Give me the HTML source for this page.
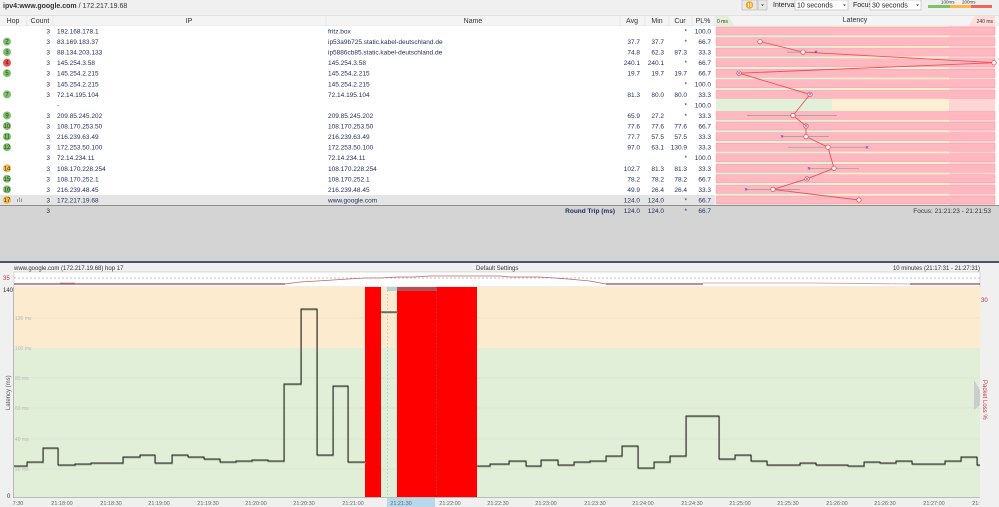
<!DOCTYPE html>
<html><head><meta charset="utf-8"><style>
html,body{margin:0;padding:0;background:#f0f0f0;}
svg{display:block;font-family:"Liberation Sans",sans-serif;}
</style></head><body>
<svg width="999" height="507" viewBox="0 0 999 507" xmlns="http://www.w3.org/2000/svg">
<rect x="0" y="0" width="999" height="15" fill="#f0f0f0"/>
<text x="3" y="8" font-size="7" fill="#333"><tspan font-weight="bold">ipv4:www.google.com</tspan> / 172.217.19.68</text>
<rect x="742" y="0" width="15" height="10" fill="#e8e8e8" stroke="#aaa" stroke-width="0.5"/>
<circle cx="749.5" cy="5" r="3.8" fill="#f5a623"/>
<rect x="748" y="3" width="1" height="4" fill="#fff"/><rect x="750.3" y="3" width="1" height="4" fill="#fff"/>
<rect x="758" y="0" width="9" height="10" fill="#e8e8e8" stroke="#aaa" stroke-width="0.5"/>
<path d="M761 4.5 L764 4.5 L762.5 6 Z" fill="#333"/>
<text x="773" y="7" font-size="7" fill="#222">Interval</text>
<rect x="795" y="0" width="53" height="10" fill="#fff" stroke="#aaa" stroke-width="0.5"/>
<text x="797" y="7.5" font-size="7" fill="#222">10 seconds</text><path d="M843 4.5 L846 4.5 L844.5 6 Z" fill="#333"/>
<text x="853" y="7" font-size="7" fill="#222">Focus</text>
<rect x="870" y="0" width="51" height="10" fill="#fff" stroke="#aaa" stroke-width="0.5"/>
<text x="872" y="7.5" font-size="7" fill="#222">30 seconds</text><path d="M916 4.5 L919 4.5 L917.5 6 Z" fill="#333"/>
<text x="941" y="3.5" font-size="4.5" fill="#333">100ms</text><text x="962" y="3.5" font-size="4.5" fill="#333">200ms</text>
<rect x="928" y="5" width="22" height="3" fill="#7dc26a"/><rect x="950" y="5" width="21" height="3" fill="#f8b84e"/><rect x="971" y="5" width="21" height="3" fill="#f0665a"/>

<rect x="0" y="15" width="999" height="11" fill="#f4f4f4"/>
<line x1="0" y1="15.5" x2="999" y2="15.5" stroke="#ccc" stroke-width="0.6"/>
<line x1="0" y1="26" x2="999" y2="26" stroke="#ddd" stroke-width="0.6"/>
<g stroke="#ddd" stroke-width="0.6">
<line x1="27" y1="16" x2="27" y2="26"/><line x1="53" y1="16" x2="53" y2="26"/><line x1="326" y1="16" x2="326" y2="26"/><line x1="620" y1="16" x2="620" y2="26"/><line x1="645" y1="16" x2="645" y2="26"/><line x1="669" y1="16" x2="669" y2="26"/><line x1="692" y1="16" x2="692" y2="26"/><line x1="715" y1="16" x2="715" y2="26"/>
</g>
<g font-size="7" fill="#333" text-anchor="middle">
<text x="13" y="23">Hop</text><text x="40" y="23">Count</text><text x="189" y="23">IP</text><text x="473" y="23">Name</text><text x="632" y="23">Avg</text><text x="657" y="23">Min</text><text x="680" y="23">Cur</text><text x="703" y="23">PL%</text><text x="855" y="22">Latency</text>
</g>
<path d="M716 16 L728 16 L735 26 L716 26 Z" fill="#e2f0d9"/>
<path d="M975 16 L995 16 L995 26 L968 26 Z" fill="#fdd"/>
<text x="717" y="23" font-size="5" fill="#333">0 ms</text>
<text x="993" y="23" font-size="5" fill="#333" text-anchor="end">240 ms</text>

<rect x="0" y="26" width="999" height="180" fill="#fff"/>
<rect x="0" y="195" width="715" height="10" fill="#e4e4e4"/>
<rect x="716" y="26" width="116" height="179" fill="#e2f0d9"/>
<rect x="832" y="26" width="117" height="179" fill="#fdefd3"/>
<rect x="949" y="26" width="46" height="179" fill="#fdd5d5"/>
<g fill="#ffb7c0" stroke="#f39aa5" stroke-width="0.4">
<rect x="716" y="27" width="279" height="8"/><rect x="716" y="37.6" width="279" height="8"/><rect x="716" y="48.1" width="279" height="8"/><rect x="716" y="58.7" width="279" height="8"/><rect x="716" y="69.2" width="279" height="8"/><rect x="716" y="79.8" width="279" height="8"/><rect x="716" y="90.4" width="279" height="8"/><rect x="716" y="111.5" width="279" height="8"/><rect x="716" y="122" width="279" height="8"/><rect x="716" y="132.6" width="279" height="8"/><rect x="716" y="143.2" width="279" height="8"/><rect x="716" y="153.7" width="279" height="8"/><rect x="716" y="164.3" width="279" height="8"/><rect x="716" y="174.8" width="279" height="8"/><rect x="716" y="185.4" width="279" height="8"/><rect x="716" y="196" width="279" height="8"/>
</g>
<g stroke="#999" stroke-width="0.7">
<line x1="787" y1="52.1" x2="816" y2="52.1"/><line x1="747" y1="115.5" x2="837" y2="115.5"/><line x1="782" y1="136.6" x2="829" y2="136.6"/><line x1="788" y1="147.2" x2="867" y2="147.2"/><line x1="809" y1="168.3" x2="859" y2="168.3"/><line x1="746" y1="189.4" x2="800" y2="189.4"/>
</g>
<polyline fill="none" stroke="#f0505a" stroke-width="0.9" points="760,41.6 803,52.1 995,62.7 739,73.2 810,94.4 793,115.5 806,126 806,136.6 828,147.2 834,168.3 807,178.8 773,189.4 859,200"/>
<g fill="#fff" stroke="#f0505a" stroke-width="0.8">
<circle cx="760" cy="41.6" r="2.2"/><circle cx="803" cy="52.1" r="2.2"/><circle cx="994" cy="62.7" r="2.2"/><circle cx="739" cy="73.2" r="2.2"/><circle cx="810" cy="94.4" r="2.2"/><circle cx="793" cy="115.5" r="2.2"/><circle cx="806" cy="126" r="2.2"/><circle cx="806" cy="136.6" r="2.2"/><circle cx="828" cy="147.2" r="2.2"/><circle cx="834" cy="168.3" r="2.2"/><circle cx="807" cy="178.8" r="2.2"/><circle cx="773" cy="189.4" r="2.2"/><circle cx="859" cy="200" r="2.2"/>
</g>
<g font-size="6" fill="#3333cc" text-anchor="middle">
<text x="816" y="54.2">×</text><text x="739" y="75.3">×</text><text x="810" y="96.5">×</text><text x="806" y="128">×</text><text x="782" y="138.7">×</text><text x="867" y="149.3">×</text><text x="809" y="170.4">×</text><text x="807" y="180.9">×</text><text x="746" y="191.5">×</text>
</g>

<g font-size="6" text-anchor="middle" fill="#333">
<circle cx="7" cy="41.6" r="4" fill="#7dc26a"/><text x="7" y="43.6">2</text>
<circle cx="7" cy="52.1" r="4" fill="#7dc26a"/><text x="7" y="54.1">3</text>
<circle cx="7" cy="62.7" r="4" fill="#f0504a"/><text x="7" y="64.7">4</text>
<circle cx="7" cy="73.2" r="4" fill="#7dc26a"/><text x="7" y="75.2">5</text>
<circle cx="7" cy="94.4" r="4" fill="#7dc26a"/><text x="7" y="96.4">7</text>
<circle cx="7" cy="115.5" r="4" fill="#7dc26a"/><text x="7" y="117.5">9</text>
<circle cx="7" cy="126" r="4" fill="#7dc26a"/><text x="7" y="128">10</text>
<circle cx="7" cy="136.6" r="4" fill="#7dc26a"/><text x="7" y="138.6">11</text>
<circle cx="7" cy="147.2" r="4" fill="#7dc26a"/><text x="7" y="149.2">12</text>
<circle cx="7" cy="168.3" r="4" fill="#f8b84e"/><text x="7" y="170.3">14</text>
<circle cx="7" cy="178.8" r="4" fill="#7dc26a"/><text x="7" y="180.8">15</text>
<circle cx="7" cy="189.4" r="4" fill="#7dc26a"/><text x="7" y="191.4">16</text>
<circle cx="7" cy="200" r="4" fill="#f8b84e"/><text x="7" y="202">17</text>
</g>
<g fill="#999"><rect x="17" y="199" width="1" height="3"/><rect x="19" y="197.5" width="1" height="4.5"/><rect x="21" y="198.5" width="1" height="3.5"/></g>

<g font-size="6.5" fill="#1e2b5c">
<g text-anchor="end">
<text x="50" y="33.5">3</text><text x="50" y="44.1">3</text><text x="50" y="54.6">3</text><text x="50" y="65.2">3</text><text x="50" y="75.7">3</text><text x="50" y="86.3">3</text><text x="50" y="96.9">3</text><text x="50" y="118">3</text><text x="50" y="128.5">3</text><text x="50" y="139.1">3</text><text x="50" y="149.7">3</text><text x="50" y="160.2">3</text><text x="50" y="170.8">3</text><text x="50" y="181.3">3</text><text x="50" y="191.9">3</text><text x="50" y="202.5">3</text><text x="50" y="213">3</text>
</g>
<text x="57" y="33.5">192.168.178.1</text><text x="328" y="33.5">fritz.box</text>
<text x="57" y="44.1">83.169.183.37</text><text x="328" y="44.1">ip53a9b725.static.kabel-deutschland.de</text>
<text x="57" y="54.6">88.134.203.133</text><text x="328" y="54.6">ip5886cb85.static.kabel-deutschland.de</text>
<text x="57" y="65.2">145.254.3.58</text><text x="328" y="65.2">145.254.3.58</text>
<text x="57" y="75.7">145.254.2.215</text><text x="328" y="75.7">145.254.2.215</text>
<text x="57" y="86.3">145.254.2.215</text><text x="328" y="86.3">145.254.2.215</text>
<text x="57" y="96.9">72.14.195.104</text><text x="328" y="96.9">72.14.195.104</text>
<text x="57" y="107.4">-</text>
<text x="57" y="118">209.85.245.202</text><text x="328" y="118">209.85.245.202</text>
<text x="57" y="128.5">108.170.253.50</text><text x="328" y="128.5">108.170.253.50</text>
<text x="57" y="139.1">216.239.63.49</text><text x="328" y="139.1">216.239.63.49</text>
<text x="57" y="149.7">172.253.50.100</text><text x="328" y="149.7">172.253.50.100</text>
<text x="57" y="160.2">72.14.234.11</text><text x="328" y="160.2">72.14.234.11</text>
<text x="57" y="170.8">108.170.228.254</text><text x="328" y="170.8">108.170.228.254</text>
<text x="57" y="181.3">108.170.252.1</text><text x="328" y="181.3">108.170.252.1</text>
<text x="57" y="191.9">216.239.48.45</text><text x="328" y="191.9">216.239.48.45</text>
<text x="57" y="202.5">172.217.19.68</text><text x="328" y="202.5">www.google.com</text>
<g text-anchor="end">
<text x="687" y="33.5">*</text><text x="711" y="33.5">100.0</text>
<text x="640" y="44.1">37.7</text><text x="664" y="44.1">37.7</text><text x="687" y="44.1">*</text><text x="711" y="44.1">66.7</text>
<text x="640" y="54.6">74.8</text><text x="664" y="54.6">62.3</text><text x="687" y="54.6">87.3</text><text x="711" y="54.6">33.3</text>
<text x="640" y="65.2">240.1</text><text x="664" y="65.2">240.1</text><text x="687" y="65.2">*</text><text x="711" y="65.2">66.7</text>
<text x="640" y="75.7">19.7</text><text x="664" y="75.7">19.7</text><text x="687" y="75.7">19.7</text><text x="711" y="75.7">66.7</text>
<text x="687" y="86.3">*</text><text x="711" y="86.3">100.0</text>
<text x="640" y="96.9">81.3</text><text x="664" y="96.9">80.0</text><text x="687" y="96.9">80.0</text><text x="711" y="96.9">33.3</text>
<text x="687" y="107.4">*</text><text x="711" y="107.4">100.0</text>
<text x="640" y="118">65.9</text><text x="664" y="118">27.2</text><text x="687" y="118">*</text><text x="711" y="118">33.3</text>
<text x="640" y="128.5">77.6</text><text x="664" y="128.5">77.6</text><text x="687" y="128.5">77.6</text><text x="711" y="128.5">66.7</text>
<text x="640" y="139.1">77.7</text><text x="664" y="139.1">57.5</text><text x="687" y="139.1">57.5</text><text x="711" y="139.1">33.3</text>
<text x="640" y="149.7">97.0</text><text x="664" y="149.7">63.1</text><text x="687" y="149.7">130.9</text><text x="711" y="149.7">33.3</text>
<text x="687" y="160.2">*</text><text x="711" y="160.2">100.0</text>
<text x="640" y="170.8">102.7</text><text x="664" y="170.8">81.3</text><text x="687" y="170.8">81.3</text><text x="711" y="170.8">33.3</text>
<text x="640" y="181.3">78.2</text><text x="664" y="181.3">78.2</text><text x="687" y="181.3">78.2</text><text x="711" y="181.3">66.7</text>
<text x="640" y="191.9">49.9</text><text x="664" y="191.9">26.4</text><text x="687" y="191.9">26.4</text><text x="711" y="191.9">33.3</text>
<text x="640" y="202.5">124.0</text><text x="664" y="202.5">124.0</text><text x="687" y="202.5">*</text><text x="711" y="202.5">66.7</text>
</g>
</g>

<rect x="0" y="205" width="999" height="57" fill="#d4d4d4"/>
<line x1="0" y1="205.5" x2="999" y2="205.5" stroke="#777" stroke-width="0.8"/>
<g font-size="6.5" fill="#1e2b5c">
<text x="50" y="213" text-anchor="end">3</text>
<text x="615" y="213" text-anchor="end" font-weight="bold">Round Trip (ms)</text>
<g text-anchor="end"><text x="640" y="213">124.0</text><text x="664" y="213">124.0</text><text x="687" y="213">*</text><text x="711" y="213">66.7</text>
<text x="991" y="213" fill="#333">Focus: 21:21:23 - 21:21:53</text></g>
</g>
<rect x="0" y="261" width="999" height="2" fill="#4a5468"/>

<rect x="0" y="263" width="999" height="244" fill="#f0f0f0"/>
<text x="14" y="270" font-size="6" fill="#333">www.google.com (172.217.19.68) hop 17</text>
<text x="476" y="270" font-size="6" fill="#333">Default Settings</text>
<text x="980" y="270" font-size="6" fill="#333" text-anchor="end">10 minutes (21:17:31 - 21:27:31)</text>
<rect x="14" y="272" width="966" height="15" fill="#fff" stroke="#bbb" stroke-width="0.5"/>
<line x1="14" y1="278" x2="980" y2="278" stroke="#888" stroke-width="0.6" stroke-dasharray="2,2"/>
<text x="3" y="280" font-size="6" fill="#c33">35</text>
<polyline fill="none" stroke="#8b1a1a" stroke-width="1" points="14,284 60,284 75,284 285,284"/>
<polyline fill="none" stroke="#c99" stroke-width="0.8" points="60,283 75,283"/>
<polyline fill="none" stroke="#b66" stroke-width="0.8" points="285,284 300,282 317,281 333,280 348,279 365,278 381,278 397,277 413,277 430,276 445,276 460,276 500,276 510,277 540,277 554,278 568,279 590,281 606,284"/>
<polyline fill="none" stroke="#8b1a1a" stroke-width="1" points="606,284 703,284"/>
<polyline fill="none" stroke="#c99" stroke-width="0.8" points="703,283 750,283 815,283 910,284"/>
<polyline fill="none" stroke="#8b1a1a" stroke-width="1" points="910,284 980,284"/>

<rect x="14" y="287" width="966" height="61" fill="#fdebcf"/>
<rect x="14" y="348" width="966" height="149" fill="#e1efd8"/>
<g stroke="#d8dccb" stroke-width="0.6">
<line x1="14" y1="318" x2="980" y2="318" stroke="#efdcc0"/><line x1="14" y1="378" x2="980" y2="378"/><line x1="14" y1="408" x2="980" y2="408"/><line x1="14" y1="439" x2="980" y2="439"/><line x1="14" y1="469" x2="980" y2="469"/>
</g>
<g font-size="5" fill="#bbb"><text x="15" y="320">120 ms</text><text x="15" y="350">100 ms</text><text x="15" y="380">80 ms</text><text x="15" y="410">60 ms</text><text x="15" y="441">40 ms</text><text x="15" y="471">20 ms</text></g>
<line x1="13.5" y1="287" x2="13.5" y2="498" stroke="#aaa" stroke-width="0.8"/>
<line x1="13" y1="497.5" x2="980" y2="497.5" stroke="#aaa" stroke-width="0.8"/>
<text x="3" y="292" font-size="6" fill="#333">140</text>
<text x="7" y="498" font-size="6" fill="#333">0</text>
<text transform="translate(10,410) rotate(-90)" font-size="6" fill="#555">Latency (ms)</text>

<rect x="365" y="287" width="16" height="210" fill="#ff0000"/>
<rect x="397" y="287" width="80" height="210" fill="#ff0000"/>
<rect x="387" y="287" width="10" height="4" fill="#b7d3d8"/>
<rect x="397" y="287" width="40" height="4" fill="#b3505a"/>
<line x1="387.5" y1="287" x2="387.5" y2="497" stroke="#a8c8cc" stroke-width="0.8" stroke-dasharray="1.5,2"/>
<line x1="436.5" y1="287" x2="436.5" y2="497" stroke="#b04048" stroke-width="0.8" stroke-dasharray="1.5,2"/>

<g fill="none" stroke-linejoin="miter">
<path stroke="#aab79e" stroke-width="0.9" transform="translate(0.6,1)" d="M14,466 H27 V462 H43 V448 H58 V465 H75 V464 H91 V463 H123 V457 H140 V455 H155 V463 H172 V455 H188 V457 H204 V459 H220 V462 H236 V461 H252 V460 H268 V461 H284 V384 H301 V309 H317 V455 H333 V386 H348 V462 H365 M381,312 H397 M477,466 H490 V464 H509 V461 H526 V466 H541 V460 H558 V465 H574 V462 H590 V461 H606 V456 H622 V446 H638 V468 H654 V462 H670 V456 H686 V416 H719 V459 H735 V455 H751 V461 H767 V465 H800 V463 H816 V465 H848 V466 H864 V462 H880 V463 H896 V461 H912 V464 H945 V461 H961 V457 H977 V465 H980"/>
<path stroke="#222" stroke-width="1" d="M14,466 H27 V462 H43 V448 H58 V465 H75 V464 H91 V463 H123 V457 H140 V455 H155 V463 H172 V455 H188 V457 H204 V459 H220 V462 H236 V461 H252 V460 H268 V461 H284 V384 H301 V309 H317 V455 H333 V386 H348 V462 H365 M381,312 H397 M477,466 H490 V464 H509 V461 H526 V466 H541 V460 H558 V465 H574 V462 H590 V461 H606 V456 H622 V446 H638 V468 H654 V462 H670 V456 H686 V416 H719 V459 H735 V455 H751 V461 H767 V465 H800 V463 H816 V465 H848 V466 H864 V462 H880 V463 H896 V461 H912 V464 H945 V461 H961 V457 H977 V465 H980"/>
</g>

<rect x="980" y="287" width="19" height="220" fill="#f0f0f0"/>
<text x="981" y="302" font-size="6" fill="#c33">30</text>
<text transform="translate(983,380) rotate(90)" font-size="6" fill="#c33">Packet Loss %</text>
<path d="M974 380 L980 390 L980 405 L974 410 Z" fill="#ccc"/>

<rect x="387" y="498" width="48" height="9" fill="#b9d9ea"/>
<g font-size="5.5" fill="#666" text-anchor="middle">
<text x="18" y="505">7:30</text><text x="62" y="505">21:18:00</text><text x="111" y="505">21:18:30</text><text x="159" y="505">21:19:00</text><text x="208" y="505">21:19:30</text><text x="256" y="505">21:20:00</text><text x="304" y="505">21:20:30</text><text x="353" y="505">21:21:00</text><text x="401" y="505">21:21:30</text><text x="450" y="505">21:22:00</text><text x="498" y="505">21:22:30</text><text x="546" y="505">21:23:00</text><text x="595" y="505">21:23:30</text><text x="643" y="505">21:24:00</text><text x="692" y="505">21:24:30</text><text x="740" y="505">21:25:00</text><text x="788" y="505">21:25:30</text><text x="837" y="505">21:26:00</text><text x="885" y="505">21:26:30</text><text x="934" y="505">21:27:00</text><text x="976" y="505">21:</text>
</g>
</svg>
</body></html>
